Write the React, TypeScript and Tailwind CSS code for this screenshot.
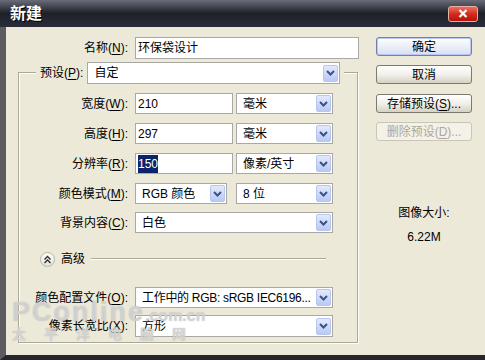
import React from "react";

const font = "font-['Liberation_Sans','Noto_Sans_CJK_SC',sans-serif]";

function Key({ label, k }: { label: string; k: string }) {
  return (
    <span className="whitespace-nowrap">
      {label}(<span className="underline underline-offset-2">{k}</span>):
    </span>
  );
}

function Arrow() {
  return (
    <span className="flex h-[17px] w-[15px] shrink-0 items-center justify-center rounded-[2px] border border-[#b6c6ee] bg-gradient-to-b from-[#e3eafd] to-[#b8c9f5]">
      <svg width="9" height="6" viewBox="0 0 9 6">
        <path d="M1 1l3.5 3.5L8 1" stroke="#3b5286" strokeWidth="2" fill="none" />
      </svg>
    </span>
  );
}

function Select({ value, w, h = "h-[21px]", tight }: { value: string; w: string; h?: string; tight?: boolean }) {
  return (
    <div className={`flex ${h} ${w} items-center justify-between border border-[#a9a8a4] bg-white pl-[6px] pr-[1px]`}>
      <span className={`overflow-hidden whitespace-nowrap ${tight ? "tracking-[-0.3px]" : ""}`}>{value}</span>
      <Arrow />
    </div>
  );
}

function Field({ value, w, h = "h-[21px]", selected }: { value: string; w: string; h?: string; selected?: boolean }) {
  return (
    <div className={`flex ${h} ${w} items-center border border-[#a9a8a4] bg-white pl-[2px]`}>
      <span className={selected ? "bg-[#0a246a] text-white" : ""}>{value}</span>
    </div>
  );
}

function Row({ label, k, mt = "mt-[9px]", children }: { label: string; k: string; mt?: string; children: React.ReactNode }) {
  return (
    <div className={`flex items-center ${mt}`}>
      <div className="w-[109px] text-right">
        <Key label={label} k={k} />
      </div>
      <div className="ml-[7px] flex gap-[3px]">{children}</div>
    </div>
  );
}

function Button({ text, k, suffix, variant }: { text: string; k?: string; suffix?: string; variant?: "default" | "disabled" }) {
  const base = "flex h-[19px] w-[96px] items-center justify-center rounded-[3px] border";
  const look =
    variant === "default"
      ? "border-[#6f7fae] bg-gradient-to-b from-[#ffffff] to-[#d8def3] shadow-[inset_0_0_0_1px_#b9c8f2]"
      : variant === "disabled"
      ? "border-[#c9c6b8] bg-[#f3f1e8] text-[#aca899]"
      : "border-[#7d796d] bg-gradient-to-b from-[#ffffff] via-[#f2f0ea] to-[#d6d1c4]";
  return (
    <div className={`${base} ${look}`}>
      {text}
      {k && (
        <>
          (<span className="underline underline-offset-2">{k}</span>)
        </>
      )}
      {suffix}
    </div>
  );
}

export default function App() {
  return (
    <div className={`${font} flex h-[360px] w-[485px] flex-col overflow-hidden text-[12px] text-black`}>
      {/* title bar */}
      <div className="flex h-[27px] shrink-0 items-center justify-between bg-gradient-to-b from-[#6a6d78] via-[#1f2129] to-[#2a2d39] pl-[10px] pr-[7px]">
        <span className="text-[16px] font-bold text-white [text-shadow:1px_1px_0_#000]">新建</span>
        <div className="flex h-[16px] w-[30px] items-center justify-center rounded-[3px] border border-[#e9b0a8] bg-gradient-to-b from-[#f06a5c] via-[#d42a1c] to-[#b21408]">
          <svg width="10" height="9" viewBox="0 0 10 9">
            <path d="M1.5 1l7 7M8.5 1l-7 7" stroke="#fff" strokeWidth="2.2" />
          </svg>
        </div>
      </div>

      {/* body */}
      <div className="relative flex flex-1 border-b-[5px] border-l-[6px] border-b-[#26262c] border-l-[#5c5c60] bg-[#ece9d8] pl-[12px] pt-[10px]">
        {/* left column */}
        <div className="w-[341px]">
          <div className="flex items-center">
            <div className="w-[110px] text-right">
              <Key label="名称" k="N" />
            </div>
            <div className="ml-[7px]">
              <Field value="环保袋设计" w="w-[224px]" h="h-[22px]" />
            </div>
          </div>

          {/* group box */}
          <div className="mt-[13px] w-[340px] border border-[#aca899] pb-[5px] shadow-[1px_1px_0_#fff,inset_1px_1px_0_#fff]">
            <div className="ml-[17px] -mt-[11px] flex w-fit items-center bg-[#ece9d8] px-[4px]">
              <Key label="预设" k="P" />
              <div className="ml-[4px]">
                <Select value="自定" w="w-[253px]" h="h-[22px]" />
              </div>
            </div>

            <Row label="宽度" k="W">
              <Field value="210" w="w-[98px]" />
              <Select value="毫米" w="w-[97px]" />
            </Row>
            <Row label="高度" k="H">
              <Field value="297" w="w-[98px]" />
              <Select value="毫米" w="w-[97px]" />
            </Row>
            <Row label="分辨率" k="R">
              <Field value="150" w="w-[98px]" selected />
              <Select value="像素/英寸" w="w-[97px]" />
            </Row>
            <Row label="颜色模式" k="M">
              <Select value="RGB 颜色" w="w-[92px]" />
              <div className="ml-[6px]">
                <Select value="8 位" w="w-[97px]" />
              </div>
            </Row>
            <Row label="背景内容" k="C" mt="mt-[8px]">
              <Select value="白色" w="w-[198px]" />
            </Row>

            {/* advanced */}
            <div className="ml-[21px] mt-[17px] flex h-[18px] items-center">
              <div className="flex h-[15px] w-[15px] items-center justify-center rounded-full border border-[#b5b3a8] bg-gradient-to-b from-white to-[#e4e2d8]">
                <svg width="9" height="9" viewBox="0 0 9 9">
                  <path d="M1.5 4.5l3-3 3 3M1.5 8l3-3 3 3" stroke="#2e2e2e" strokeWidth="1.4" fill="none" />
                </svg>
              </div>
              <span className="ml-[6px]">高级</span>
              <div className="ml-[6px] h-[2px] w-[235px] border-t border-b border-t-[#aca899] border-b-white" />
            </div>

            <Row label="颜色配置文件" k="O" mt="mt-[19px]">
              <Select value="工作中的 RGB: sRGB IEC6196..." w="w-[198px]" tight />
            </Row>
            <Row label="像素长宽比" k="X" mt="mt-[7px]">
              <Select value="方形" w="w-[198px]" h="h-[22px]" />
            </Row>
          </div>
        </div>

        {/* right column */}
        <div className="ml-[17px] flex w-[96px] flex-col items-center">
          <Button text="确定" variant="default" />
          <div className="mt-[9px]">
            <Button text="取消" />
          </div>
          <div className="mt-[10px]">
            <Button text="存储预设" k="S" suffix="..." />
          </div>
          <div className="mt-[9px]">
            <Button text="删除预设" k="D" suffix="..." variant="disabled" />
          </div>
          <div className="mt-[64px] leading-[16px]">图像大小:</div>
          <div className="mt-[8px] leading-[16px]">6.22M</div>
        </div>

        {/* watermark */}
        <div className="pointer-events-none absolute left-[6px] top-[272px] whitespace-nowrap font-['Liberation_Sans',sans-serif] font-bold leading-none text-white/50 [text-shadow:0_0_1px_#a0a0a0]">
          <span className="text-[27px] tracking-[2px]">PConline</span>
          <span className="text-[16px]">.com.cn</span>
        </div>
        <div className="pointer-events-none absolute left-[6px] top-[300px] text-[14px] font-bold leading-none tracking-[18px] text-white/50 [text-shadow:0_0_1px_#a0a0a0]">
          太平洋电脑网
        </div>
      </div>
    </div>
  );
}
